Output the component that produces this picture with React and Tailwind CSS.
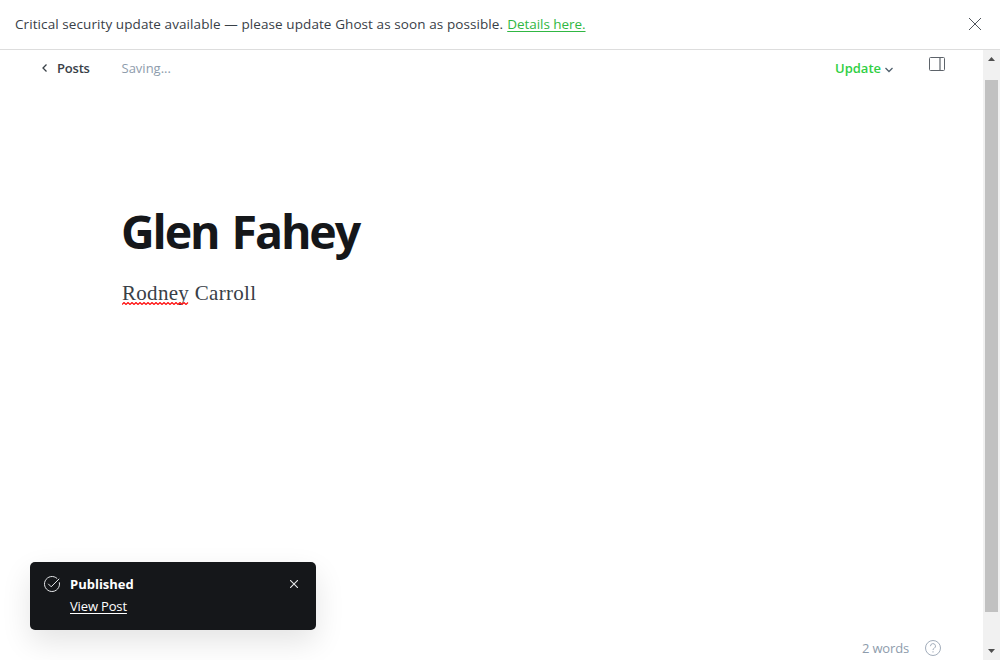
function Banner() {
  return (
    <aside className="flex h-[50px] shrink-0 items-center justify-between border-b border-[#dddddd] pb-[2px] pl-[15px] pr-[19px]">
      <p className="whitespace-nowrap text-[13.5px] leading-5 tracking-[0.085px] text-[#394047]">
        Critical security update available — please update Ghost as soon as possible.{' '}
        <a className="ml-[0.5px] tracking-[-0.05px] text-[#30b743] underline underline-offset-2">Details here.</a>
      </p>
      <button aria-label="Close">
        <svg className="block size-[12px]" viewBox="0 0 12 12" fill="none" stroke="#50555c" strokeWidth="1">
          <path d="M0 0l12 12M12 0L0 12" />
        </svg>
      </button>
    </aside>
  );
}

function Header() {
  return (
    <header className="flex h-9 items-start justify-between pl-[41px] pr-[38px]">
      <div className="flex pt-2 text-[13px] leading-5">
        <a className="flex w-[80.5px] items-center font-semibold tracking-[-0.2px] text-[#394047]">
          <svg className="mr-2 h-2 w-2" viewBox="0 0 8 8" fill="none" stroke="#394047" strokeWidth="1.3">
            <path d="M5.5.5L2 4l3.5 3.5" />
          </svg>
          Posts
        </a>
        <span className="text-[#8e9cac]">Saving...</span>
      </div>
      <div className="flex items-start">
        <button className="flex w-[94px] items-center pt-2 text-[13px] font-semibold leading-5 text-[#30cf43]">
          Update
          <svg className="ml-1 mt-1 h-[6px] w-[8px]" viewBox="0 0 8 6" fill="none" stroke="#50606d" strokeWidth="1.3">
            <path d="M.5 1L4 4.5 7.5 1" />
          </svg>
        </button>
        <button aria-label="Settings" className="pt-[7px]">
          <svg className="block h-[14px] w-4" viewBox="0 0 16 14" fill="none" stroke="#5d636a">
            <rect x=".5" y=".5" width="15" height="13" rx="1" />
            <path d="M11 .5v13" strokeWidth="1.2" />
          </svg>
        </button>
      </div>
    </header>
  );
}

function Toast() {
  return (
    <div className="absolute bottom-[30px] left-[30px] flex h-[68px] w-[286px] rounded-[5px] bg-[#15171a] pl-[14px] pr-[18px] pt-[14px] text-white shadow-[0_12px_30px_rgba(0,0,0,0.11)]">
      <svg className="block size-4" viewBox="0 0 16 16" fill="none" stroke="#e5e7e9">
        <path d="M13.2 2.6A7.5 7.5 0 1 0 15.3 6.3M4.2 7.8l3 3 8-8" />
      </svg>
      <div className="-mt-[2px] ml-[10px] flex-1 text-[13px]">
        <div className="font-bold leading-5">Published</div>
        <a className="mt-[2px] block font-medium leading-5 tracking-[-0.15px] underline underline-offset-2">View Post</a>
      </div>
      <svg className="mt-1 block size-[8px]" viewBox="0 0 8 8" fill="none" stroke="#e5e7e9" strokeWidth="1.1">
        <path d="M0 0l8 8M8 0l-8 8" />
      </svg>
    </div>
  );
}

function ScrollBar() {
  return (
    <div className="flex w-[17px] shrink-0 flex-col items-center bg-[#f1f1f1] pt-[7px]">
      <svg className="block h-1 w-[7px]" viewBox="0 0 7 4" fill="#505050"><path d="M0 4L3.5 0 7 4z" /></svg>
      <div className="mt-[19px] h-[532px] w-[13px] bg-[#c1c1c1]" />
      <svg className="mt-[37px] block h-1 w-[7px]" viewBox="0 0 7 4" fill="#505050"><path d="M0 0h7L3.5 4z" /></svg>
    </div>
  );
}

export default function App() {
  return (
    <div className="relative flex h-[660px] w-[1000px] flex-col overflow-hidden bg-white font-['Open_Sans',sans-serif]">
      <Banner />
      <div className="flex min-h-0 flex-1">
        <main className="flex min-w-0 flex-1 flex-col">
          <Header />
          <article className="flex-1 pl-[121px] pt-[113px]">
            <h1 className="whitespace-nowrap text-[46.5px] font-bold leading-[64px] tracking-[-2.1px] text-[#15171a] [word-spacing:3px]">Glen Fahey</h1>
            <p className="ml-px mt-[14px] whitespace-nowrap font-['Liberation_Serif',serif] text-[21px] leading-8 tracking-[0.3px] text-[#394047]">
              <span className="relative inline-block">
                Rodney
                <svg className="absolute left-0 top-[25px] h-[3px] w-[68px]" viewBox="0 0 68 3" fill="none" stroke="#ff1010" strokeWidth="1.2">
                  <path d="M0 2.5l2-2 2 2 2-2 2 2 2-2 2 2 2-2 2 2 2-2 2 2 2-2 2 2 2-2 2 2 2-2 2 2 2-2 2 2 2-2 2 2 2-2 2 2 2-2 2 2 2-2 2 2 2-2 2 2 2-2 2 2 2-2 2 2 2-2" />
                </svg>
              </span>{' '}
              Carroll
            </p>
          </article>
          <footer className="flex h-6 items-center justify-end pr-[42px] text-[13px] tracking-[-0.15px] text-[#8e9cac]">
            <span className="pt-px">2 words</span>
            <svg className="ml-4 block size-4" viewBox="0 0 16 16" fill="none" stroke="#a2adbb">
              <circle cx="8" cy="8" r="7.5" />
              <path d="M5.5 6.2a2.5 2.5 0 1 1 3.7 2.1C8.4 8.7 8 9 8 10M8 11.2v1.3" />
            </svg>
          </footer>
        </main>
        <ScrollBar />
      </div>
      <Toast />
    </div>
  );
}
